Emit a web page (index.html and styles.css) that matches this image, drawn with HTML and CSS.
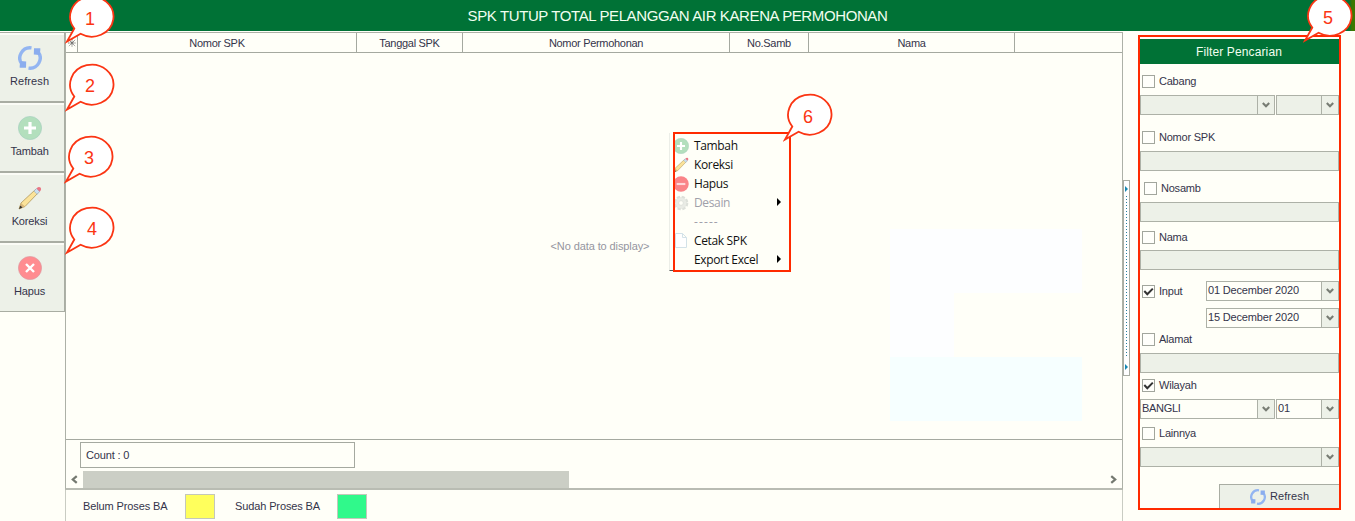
FILE: index.html
```html
<!DOCTYPE html>
<html lang="id">
<head>
<meta charset="utf-8">
<title>SPK Tutup Total Pelanggan Air</title>
<link rel="stylesheet" href="styles.css">
</head>
<body>
<svg class="defs" width="0" height="0">
  <defs>
    <symbol id="i-refresh" viewBox="0 0 24 24">
      <g fill="none" stroke="#93b5f1" stroke-width="3.4"><path d="M10.500 22.100 A10.200 10.200 0 0 0 19.800 5.500"/><path d="M13.500 1.900 A10.200 10.200 0 0 0 4.200 18.500"/></g>
      <path fill="#8badee" d="M16 2.300H22.300V4L21.800 9L15.800 8.500Z"/>
      <path fill="#8badee" d="M8 21.700H1.700V20L2.200 15L8.200 15.500Z"/>
    </symbol>
    <symbol id="i-plus" viewBox="0 0 24 24"><circle cx="12" cy="12" r="11.6" fill="#b3dfbd" stroke="#a3ccc0" stroke-width=".6"/><path d="M12 6V18M6 12H18" stroke="#fff" stroke-width="3.2"/></symbol>
    <symbol id="i-x" viewBox="0 0 24 24"><circle cx="12" cy="12" r="11.6" fill="#ff8c90" stroke="#d99aa2" stroke-width=".6"/><path d="M8 8L16 16M16 8L8 16" stroke="#fff" stroke-width="2.4"/></symbol>
    <symbol id="i-minus" viewBox="0 0 24 24"><circle cx="12" cy="12" r="11.6" fill="#fa8488"/><path d="M5.500 12H18.500" stroke="#ffd6d8" stroke-width="3.200"/></symbol>
    <symbol id="i-pencil" viewBox="0 0 24 24"><path d="M3 17L17.500 3.500L20.500 6.500L7 20.500L1 23Z" fill="#fbe39a" stroke="#a58b4d" stroke-width=".7"/><path d="M3 17L7 20.500L1 23Z" fill="#d8b77c"/><path d="M2.300 19.500L4.500 21.500L1 23Z" fill="#333"/><path d="M16 5L18.500 2.500L21.700 5.700L19 8.300Z" fill="#c9dff1" stroke="#8aa2bb" stroke-width=".5"/><path d="M18.500 2.500Q20.500.300 22.500 1.500Q24 3.500 21.700 5.700Z" fill="#ea7684"/></symbol>
    <symbol id="i-gear" viewBox="0 0 24 24"><circle cx="12" cy="12" r="9" fill="#e8ebe5" stroke="#dde0da" stroke-width="4" stroke-dasharray="4.700 2.360"/><circle cx="12" cy="12" r="8" fill="#e9ebe5"/><circle cx="12" cy="12" r="3.500" fill="#fffff8" stroke="#d8dbd5"/></symbol>
    <symbol id="i-page" viewBox="0 0 16 16"><path d="M2.500.500H9.500L13.500 4.500V14.500H2.500ZM9.500.500V4.500H13.500" fill="#fff" stroke="#d3e2e8"/></symbol>
    <symbol id="i-down" viewBox="0 0 8 6"><path d="M.8 1L4 4.200L7.200 1" fill="none" stroke="#777c73" stroke-width="2.100"/></symbol>
    <symbol id="i-check" viewBox="0 0 11 11"><path d="M1.300 5L4.300 8.200L9.800 2.600" fill="none" stroke="#333" stroke-width="2"/></symbol>
    <symbol id="i-bubble" viewBox="0 0 50 50"><path d="M9.300 33.500A21.700 20 0 1 1 15.600 38.800L2 46.500Z" fill="#fff" stroke="#fb3513" stroke-width="1.800"/></symbol>
  </defs>
</svg>

<div class="app">
  <header class="titlebar"><h1>SPK TUTUP TOTAL PELANGGAN AIR KARENA PERMOHONAN</h1></header>
  <div class="body">
    <nav class="tools">
      <button class="tool"><svg><use href="#i-refresh"/></svg><span class="loose">Refresh</span></button>
      <button class="tool"><svg><use href="#i-plus"/></svg><span>Tambah</span></button>
      <button class="tool"><svg><use href="#i-pencil"/></svg><span>Koreksi</span></button>
      <button class="tool"><svg><use href="#i-x"/></svg><span>Hapus</span></button>
    </nav>

    <main class="main">
      <section class="grid">
        <div class="cols">
          <div><svg class="star" viewBox="0 0 9 9"><path d="M4.500 0V9M0 4.500H9M1 1L8 8M8 1L1 8" stroke="#555" stroke-width=".9" stroke-dasharray="1.300 .500"/></svg></div>
          <div>Nomor SPK</div><div>Tanggal SPK</div><div>Nomor Permohonan</div><div>No.Samb</div><div>Nama</div><div></div>
        </div>
        <div class="rows"><span class="empty">&lt;No data to display&gt;</span>
          <svg class="mark" viewBox="0 0 192 192"><path d="M0 0H192V64H64V128H0Z" fill="#fdfeff"/><path d="M0 128H192V192H0Z" fill="#f6ffff"/></svg>
        </div>
        <div class="summary"><div class="count">Count : 0</div></div>
        <div class="scroll">
          <svg viewBox="0 0 8 8"><path d="M6 1L2.500 4L6 7" fill="none" stroke="#747970" stroke-width="2"/></svg>
          <div class="track"><div class="thumb"></div></div>
          <svg viewBox="0 0 8 8"><path d="M2 1L5.500 4L2 7" fill="none" stroke="#747970" stroke-width="2"/></svg>
        </div>
      </section>
      <footer class="legend"><span>Belum Proses BA</span><i class="yellow"></i><span>Sudah Proses BA</span><i class="green"></i></footer>
    </main>

    <div class="splitter"><b></b><i></i><b></b></div>

    <aside class="filter">
      <h2>Filter Pencarian</h2>
      <label class="check g11"><i></i>Cabang</label>
      <div class="line g7"><div class="field off wide"><span></span><em><svg><use href="#i-down"/></svg></em></div><div class="field off"><span></span><em><svg><use href="#i-down"/></svg></em></div></div>
      <label class="check g16"><i></i>Nomor SPK</label>
      <div class="line g7"><div class="field off"></div></div>
      <label class="check g11 indent"><i></i>Nosamb</label>
      <div class="line g7"><div class="field off"></div></div>
      <label class="check g9"><i></i>Nama</label>
      <div class="line g6"><div class="field off"></div></div>
      <div class="dates g11">
        <label class="check"><i><svg><use href="#i-check"/></svg></i>Input</label>
        <div class="range"><div class="field"><span>01 December 2020</span><em><svg><use href="#i-down"/></svg></em></div><div class="field"><span>15 December 2020</span><em><svg><use href="#i-down"/></svg></em></div></div>
      </div>
      <label class="check g5"><i></i>Alamat</label>
      <div class="line g7"><div class="field off"></div></div>
      <label class="check g6"><i><svg><use href="#i-check"/></svg></i>Wilayah</label>
      <div class="line g7"><div class="field wide"><span class="tight">BANGLI</span><em><svg><use href="#i-down"/></svg></em></div><div class="field"><span>01</span><em><svg><use href="#i-down"/></svg></em></div></div>
      <label class="check g8"><i></i>Lainnya</label>
      <div class="line g7"><div class="field off"><span></span><em><svg><use href="#i-down"/></svg></em></div></div>
      <button class="apply"><svg><use href="#i-refresh"/></svg>Refresh</button>
    </aside>
  </div>

  <div class="popup">
    <ul>
      <li><svg><use href="#i-plus"/></svg>Tambah</li>
      <li><svg><use href="#i-pencil"/></svg>Koreksi</li>
      <li><svg><use href="#i-minus"/></svg>Hapus</li>
      <li class="dim more"><svg><use href="#i-gear"/></svg>Desain</li>
      <li class="dim dashes"><svg></svg>-----</li>
      <li><svg><use href="#i-page"/></svg>Cetak SPK</li>
      <li class="more"><svg></svg>Export Excel</li>
    </ul>
  </div>

  <div class="note n1"><svg><use href="#i-bubble"/></svg><span>1</span></div>
  <div class="note n2"><svg><use href="#i-bubble"/></svg><span>2</span></div>
  <div class="note n3"><svg><use href="#i-bubble"/></svg><span>3</span></div>
  <div class="note n4"><svg><use href="#i-bubble"/></svg><span>4</span></div>
  <div class="note n5"><svg><use href="#i-bubble"/></svg><span>5</span></div>
  <div class="note n6"><svg><use href="#i-bubble"/></svg><span>6</span></div>
</div>
</body>
</html>
```
FILE: styles.css
```css
*, *::before, *::after { box-sizing: border-box; }
body { margin: 0; background: #fffff8; color: #34344a; font: 11px/13px "Liberation Sans", Arial, sans-serif; overflow: hidden; }
button { font: inherit; color: inherit; margin: 0; padding: 0; }
svg { display: block; }
.defs { position: absolute; }
.app { position: relative; width: 1355px; height: 521px; overflow: hidden; display: flex; flex-direction: column; }

.titlebar { height: 31px; flex: none; background: linear-gradient(90deg, #007236 1349px, #3c7800 1352px); display: flex; justify-content: center; align-items: center; }
.titlebar h1 { margin: 0; color: #f2fff0; font-size: 15px; line-height: 18px; font-weight: 400; white-space: nowrap; letter-spacing: -.39px; }
.body { flex: 1; display: flex; padding-top: 1px; }

.tools { width: 65px; flex: none; }
.tool { width: 65px; height: 70px; display: flex; flex-direction: column; align-items: center; padding: 11px 5px 0 0; background: #edf1e8; border: 1px solid #a9ada3; border-left: 0; box-shadow: inset 0 2px #fbfcf6; gap: 5px; }
.tool svg { width: 24px; height: 24px; margin-top: 2px; }
.tool span { letter-spacing: -.15px; }
.tool .loose { letter-spacing: .1px; }

.main { width: 1058px; flex: none; display: flex; flex-direction: column; border: solid #c9ccc3; border-width: 0 1px; }
.grid { height: 458px; margin: 0 -1px; border: 1px solid #adb1a7; border-bottom: 2px solid #b9bcb3; display: flex; flex-direction: column; }
.cols { height: 20px; flex: none; display: grid; grid-template-columns: 12px 279px 106px 267px 79px 206px 1fr; border-bottom: 1px solid #a5a9a0; letter-spacing: -.3px; }
.cols div { border-right: 1px solid #a5a9a0; text-align: center; line-height: 20px; }
.cols div:last-child { border-right: 0; }
.star { width: 8px; height: 8px; margin: 6px 0 0 2px; }
.rows { flex: 1; position: relative; display: flex; align-items: center; justify-content: center; border-bottom: 1px solid #a5a9a0; }
.empty { color: #95959f; letter-spacing: -.1px; padding-left: 12px; }
.mark { position: absolute; left: 824px; top: 176px; width: 192px; height: 192px; }
.summary { height: 31px; flex: none; padding: 2px 0 0 14px; }
.count { width: 275px; height: 26px; border: 1px solid #a5a9a0; padding: 6px 5px; letter-spacing: -.15px; }
.scroll { height: 17px; flex: none; display: flex; align-items: center; }
.scroll svg { width: 9px; height: 9px; margin: 0 4px; }
.track { flex: 1; height: 17px; }
.thumb { width: 486px; height: 17px; background: #cbcec5; }
.legend { flex: 1; display: flex; align-items: center; padding: 2px 17px 0; letter-spacing: -.12px; }
.legend i { width: 30px; height: 25px; border: 1px solid #c4c8ba; }
.legend span { width: 102px; }
.legend i + span { margin-left: 20px; }
.legend .yellow { background: #ffff5c; }
.legend .green { background: #30f98b; }

.splitter { width: 7px; height: 196px; margin-top: 148px; flex: none; border: 1px solid #a9ada3; display: flex; flex-direction: column; align-items: center; padding: 5px 0; background: #fff; }
.splitter b { border: solid transparent; border-width: 3px 0 3px 3px; border-left-color: #1687b2; }
.splitter i { width: 1px; flex: 1; margin: 4px 0 8px; background: repeating-linear-gradient(#257f9e 0 1px, transparent 1px 3px); }

.filter { width: 203px; height: 475px; margin: 3px 0 0 8px; border: 2px solid #ff2a00; padding-top: 2px; }
.filter h2 { margin: 0; height: 25px; background: #007236; color: #f2fff0; font-size: 12px; line-height: 26px; font-weight: 400; text-align: center; letter-spacing: .12px; padding-right: 1px; }
.check { display: flex; align-items: center; height: 13px; padding-left: 2px; gap: 4px; letter-spacing: -.22px; }
.check i { width: 13px; height: 13px; border: 1px solid #a2a69d; background: #fffffb; }
.check svg { width: 11px; height: 11px; }
.indent { padding-left: 4px; }
.g5 { margin-top: 5px; } .g6 { margin-top: 6px; } .g7 { margin-top: 7px; } .g8 { margin-top: 8px; } .g9 { margin-top: 9px; } .g11 { margin-top: 11px; } .g16 { margin-top: 16px; }
.line { display: flex; gap: 1px; }
.field { flex: 1; height: 20px; border: 1px solid #adb1a7; display: flex; }
.field.wide { flex: 0 0 135px; }
.off { background: #edf1e8; }
.field span { flex: 1; padding: 2px 0 0 1px; letter-spacing: -.17px; white-space: nowrap; }
.field .tight { letter-spacing: -.3px; }
.field em { width: 17px; border-left: 1px solid #adb1a7; background: #edf1e8; display: flex; align-items: center; justify-content: center; }
.field em svg { width: 8px; height: 6px; }
.dates { display: flex; }
.dates .check { width: 66px; margin-top: 4px; }
.range { flex: 1; display: flex; flex-direction: column; gap: 7px; }
.range .field { flex: none; }
.apply { width: 120px; height: 24px; margin: 17px 0 0 79px; border: 1px solid #a9ada3; border-width: 1px 0 0 1px; background: #edf1e8; display: flex; align-items: center; justify-content: center; gap: 4px; letter-spacing: .1px; }
.apply svg { width: 16px; height: 16px; }

.popup { position: absolute; left: 669px; top: 133px; width: 121px; height: 138px; background: #fffff8; border-left: 1px solid #eceee8; border-bottom: 1px solid #555; color: #111; font: 12px/19px "Open Sans", "Noto Sans", sans-serif; }
.popup::after { content: ""; position: absolute; left: 3px; top: -1px; width: 118px; height: 140px; border: 2px solid #ff2a00; }
.popup ul { list-style: none; margin: 0; padding: 3px 0 0 3px; }
.popup li { height: 19px; display: flex; align-items: center; gap: 5px; letter-spacing: -.35px; }
.popup li svg { width: 16px; height: 16px; }
.popup .dashes { letter-spacing: 1.1px; }
.popup .dim { color: #a0a0aa; }
.more::after { content: ""; margin: 0 9px 2px auto; border: solid transparent; border-width: 4px 0 4px 4px; border-left-color: #000; }

.note { position: absolute; width: 50px; height: 50px; }
.note svg { width: 50px; height: 50px; }
.note span { position: absolute; left: 0; top: 13px; width: 50px; text-align: center; color: #fb3513; font-size: 18px; line-height: 20px; }
.n1 { left: 65px; top: -5px; }
.n2 { left: 65px; top: 63px; }
.n3 { left: 64px; top: 135px; }
.n4 { left: 65px; top: 206px; }
.n4 span { left: 2px; }
.n5 { left: 1303px; top: -6px; }
.n6 { left: 783px; top: 93px; }
.n1 span, .n5 span, .n6 span { top: 14px; }
```
